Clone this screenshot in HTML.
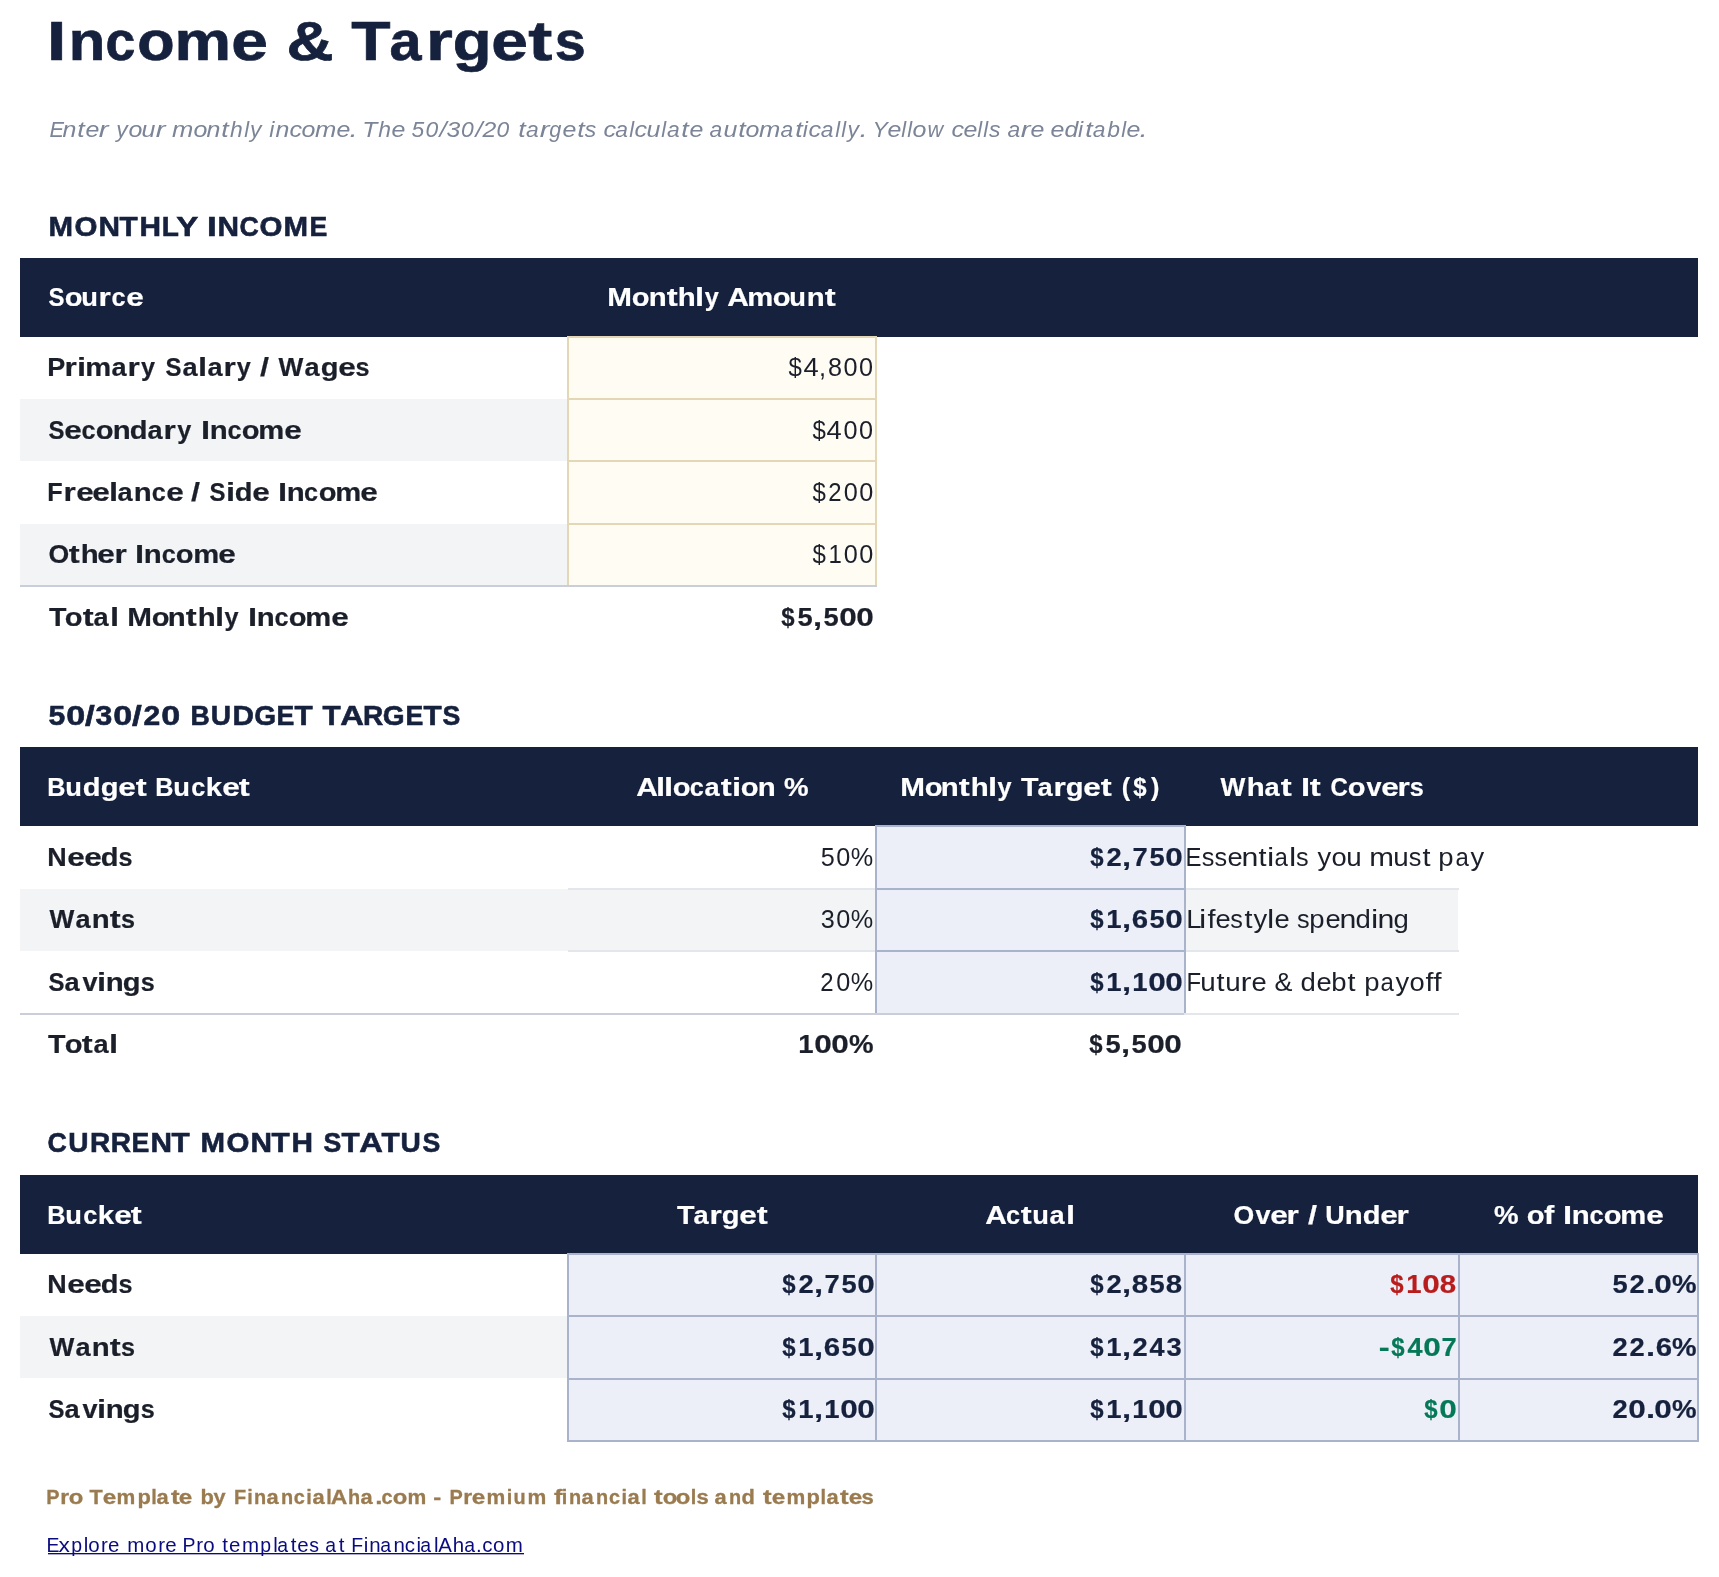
<!DOCTYPE html>
<html><head><meta charset="utf-8"><title>Income &amp; Targets</title>
<style>
html,body{margin:0;padding:0;background:#ffffff;width:1719px;height:1577px;overflow:hidden;position:relative}
.q{position:absolute}
#tx{position:absolute;left:0;top:0;width:1719px;height:1577px;will-change:transform}
#tx i{position:absolute;display:block;line-height:100px;height:100px;white-space:pre;text-align:center;font-style:normal;font-family:"Liberation Sans",sans-serif}
#tx .s0{top:-9.00px;font-size:55.62px;color:#15213d;font-weight:bold;-webkit-text-stroke:0.7px #15213d}
#tx .s1{top:78.60px;font-size:22.88px;color:#7b8597;font-style:italic}
#tx .s2{top:176.75px;font-size:28.08px;color:#15213d;font-weight:bold;-webkit-text-stroke:0.6px #15213d}
#tx .s3{top:247.25px;font-size:25.23px;color:#ffffff;font-weight:bold;-webkit-text-stroke:0.2px #ffffff}
#tx .s4{top:317.30px;font-size:25.23px;color:#1b1f2a;font-weight:bold;-webkit-text-stroke:0.2px #1b1f2a}
#tx .s5{top:379.70px;font-size:25.23px;color:#1b1f2a;font-weight:bold;-webkit-text-stroke:0.2px #1b1f2a}
#tx .s6{top:442.00px;font-size:25.23px;color:#1b1f2a;font-weight:bold;-webkit-text-stroke:0.2px #1b1f2a}
#tx .s7{top:504.00px;font-size:25.23px;color:#1b1f2a;font-weight:bold;-webkit-text-stroke:0.2px #1b1f2a}
#tx .s8{top:566.50px;font-size:25.23px;color:#1b1f2a;font-weight:bold;-webkit-text-stroke:0.2px #1b1f2a}
#tx .s9{top:317.30px;font-size:25.23px;color:#1b1f2a}
#tx .s10{top:379.70px;font-size:25.23px;color:#1b1f2a}
#tx .s11{top:442.00px;font-size:25.23px;color:#1b1f2a}
#tx .s12{top:504.00px;font-size:25.23px;color:#1b1f2a}
#tx .s13{top:665.80px;font-size:28.08px;color:#15213d;font-weight:bold;-webkit-text-stroke:0.6px #15213d}
#tx .s14{top:737.30px;font-size:25.23px;color:#ffffff;font-weight:bold;-webkit-text-stroke:0.2px #ffffff}
#tx .s15{top:807.00px;font-size:25.23px;color:#1b1f2a;font-weight:bold;-webkit-text-stroke:0.2px #1b1f2a}
#tx .s16{top:807.00px;font-size:25.23px;color:#1b1f2a}
#tx .s17{top:807.00px;font-size:25.23px;color:#15213d;font-weight:bold;-webkit-text-stroke:0.2px #15213d}
#tx .s18{top:869.10px;font-size:25.23px;color:#1b1f2a;font-weight:bold;-webkit-text-stroke:0.2px #1b1f2a}
#tx .s19{top:869.10px;font-size:25.23px;color:#1b1f2a}
#tx .s20{top:869.10px;font-size:25.23px;color:#15213d;font-weight:bold;-webkit-text-stroke:0.2px #15213d}
#tx .s21{top:931.70px;font-size:25.23px;color:#1b1f2a;font-weight:bold;-webkit-text-stroke:0.2px #1b1f2a}
#tx .s22{top:931.70px;font-size:25.23px;color:#1b1f2a}
#tx .s23{top:931.70px;font-size:25.23px;color:#15213d;font-weight:bold;-webkit-text-stroke:0.2px #15213d}
#tx .s24{top:994.00px;font-size:25.23px;color:#1b1f2a;font-weight:bold;-webkit-text-stroke:0.2px #1b1f2a}
#tx .s25{top:1092.60px;font-size:28.08px;color:#15213d;font-weight:bold;-webkit-text-stroke:0.6px #15213d}
#tx .s26{top:1165.30px;font-size:25.23px;color:#ffffff;font-weight:bold;-webkit-text-stroke:0.2px #ffffff}
#tx .s27{top:1234.00px;font-size:25.23px;color:#1b1f2a;font-weight:bold;-webkit-text-stroke:0.2px #1b1f2a}
#tx .s28{top:1234.00px;font-size:25.23px;color:#15213d;font-weight:bold;-webkit-text-stroke:0.2px #15213d}
#tx .s29{top:1234.00px;font-size:25.23px;color:#b91c1c;font-weight:bold;-webkit-text-stroke:0.2px #b91c1c}
#tx .s30{top:1296.80px;font-size:25.23px;color:#1b1f2a;font-weight:bold;-webkit-text-stroke:0.2px #1b1f2a}
#tx .s31{top:1296.80px;font-size:25.23px;color:#15213d;font-weight:bold;-webkit-text-stroke:0.2px #15213d}
#tx .s32{top:1296.80px;font-size:25.23px;color:#047857;font-weight:bold;-webkit-text-stroke:0.2px #047857}
#tx .s33{top:1359.00px;font-size:25.23px;color:#1b1f2a;font-weight:bold;-webkit-text-stroke:0.2px #1b1f2a}
#tx .s34{top:1359.00px;font-size:25.23px;color:#15213d;font-weight:bold;-webkit-text-stroke:0.2px #15213d}
#tx .s35{top:1359.00px;font-size:25.23px;color:#047857;font-weight:bold;-webkit-text-stroke:0.2px #047857}
#tx .s36{top:1447.00px;font-size:19.89px;color:#9a7b4f;font-weight:bold;-webkit-text-stroke:0.3px #9a7b4f}
#tx .s37{top:1494.70px;font-size:20.48px;color:#0b0b80}
</style></head><body>
<div class="q" style="left:20px;top:258px;width:1678px;height:79px;background:#15213d"></div>
<div class="q" style="left:20px;top:747px;width:1678px;height:79px;background:#15213d"></div>
<div class="q" style="left:20px;top:1175px;width:1678px;height:79px;background:#15213d"></div>
<div class="q" style="left:20px;top:399px;width:548px;height:62px;background:#f3f4f6"></div>
<div class="q" style="left:20px;top:524px;width:548px;height:61px;background:#f3f4f6"></div>
<div class="q" style="left:568px;top:337px;width:308px;height:249px;background:#fffcf3"></div>
<div class="q" style="left:568px;top:336px;width:308px;height:2px;background:#e3d7b5"></div>
<div class="q" style="left:568px;top:398px;width:308px;height:2px;background:#e3d7b5"></div>
<div class="q" style="left:568px;top:460px;width:308px;height:2px;background:#e3d7b5"></div>
<div class="q" style="left:568px;top:523px;width:308px;height:2px;background:#e3d7b5"></div>
<div class="q" style="left:567px;top:336px;width:2px;height:249px;background:#e3d7b5"></div>
<div class="q" style="left:875px;top:336px;width:2px;height:249px;background:#e3d7b5"></div>
<div class="q" style="left:20px;top:585px;width:857px;height:2px;background:#c9ced8"></div>
<div class="q" style="left:20px;top:889px;width:1438px;height:62px;background:#f3f4f6"></div>
<div class="q" style="left:568px;top:888px;width:308px;height:2px;background:#e3e6eb"></div>
<div class="q" style="left:568px;top:950px;width:308px;height:2px;background:#e3e6eb"></div>
<div class="q" style="left:1185px;top:888px;width:274px;height:2px;background:#e3e6eb"></div>
<div class="q" style="left:1185px;top:950px;width:274px;height:2px;background:#e3e6eb"></div>
<div class="q" style="left:876px;top:826px;width:309px;height:188px;background:#eceff7"></div>
<div class="q" style="left:876px;top:825px;width:309px;height:2px;background:#a9b3cc"></div>
<div class="q" style="left:876px;top:888px;width:309px;height:2px;background:#a9b3cc"></div>
<div class="q" style="left:876px;top:950px;width:309px;height:2px;background:#a9b3cc"></div>
<div class="q" style="left:875px;top:825px;width:2px;height:188px;background:#a9b3cc"></div>
<div class="q" style="left:1184px;top:825px;width:2px;height:188px;background:#a9b3cc"></div>
<div class="q" style="left:20px;top:1013px;width:1164px;height:2px;background:#c9ced8"></div>
<div class="q" style="left:1184px;top:1013px;width:275px;height:2px;background:#e3e6eb"></div>
<div class="q" style="left:20px;top:1316px;width:548px;height:62px;background:#f3f4f6"></div>
<div class="q" style="left:568px;top:1254px;width:1130px;height:187px;background:#eceff7"></div>
<div class="q" style="left:567px;top:1253px;width:1132px;height:2px;background:#a9b3cc"></div>
<div class="q" style="left:567px;top:1315px;width:1132px;height:2px;background:#a9b3cc"></div>
<div class="q" style="left:567px;top:1378px;width:1132px;height:2px;background:#a9b3cc"></div>
<div class="q" style="left:567px;top:1440px;width:1132px;height:2px;background:#a9b3cc"></div>
<div class="q" style="left:567px;top:1253px;width:2px;height:189px;background:#a9b3cc"></div>
<div class="q" style="left:875px;top:1253px;width:2px;height:189px;background:#a9b3cc"></div>
<div class="q" style="left:1184px;top:1253px;width:2px;height:189px;background:#a9b3cc"></div>
<div class="q" style="left:1458px;top:1253px;width:2px;height:189px;background:#a9b3cc"></div>
<div class="q" style="left:1697px;top:1253px;width:2px;height:189px;background:#a9b3cc"></div>
<div class="q" style="left:48px;top:1553px;width:476px;height:1px;background:#0b0b80"></div>
<div class="q" style="left:48px;top:1554px;width:476px;height:1px;background:#0b0b80;opacity:0.35"></div>
<div id="tx">
<i class="s0" style="left:49.45px;transform-origin:8.00px 0;transform:scaleX(1.250)">I</i>
<i class="s0" style="left:69.53px;transform-origin:17.50px 0;transform:scaleX(1.074)">n</i>
<i class="s0" style="left:105.48px;transform-origin:15.50px 0;transform:scaleX(0.963)">c</i>
<i class="s0" style="left:139.48px;transform-origin:17.00px 0;transform:scaleX(1.100)">o</i>
<i class="s0" style="left:178.09px;transform-origin:25.00px 0;transform:scaleX(1.143)">m</i>
<i class="s0" style="left:233.86px;transform-origin:15.50px 0;transform:scaleX(1.185)">e</i>
<i class="s0" style="left:289.78px;transform-origin:20.50px 0;transform:scaleX(1.171)">&amp;</i>
<i class="s0" style="left:354.17px;transform-origin:17.00px 0;transform:scaleX(1.156)">T</i>
<i class="s0" style="left:390.00px;transform-origin:16.50px 0;transform:scaleX(1.034)">a</i>
<i class="s0" style="left:428.95px;transform-origin:12.50px 0;transform:scaleX(1.235)">r</i>
<i class="s0" style="left:454.57px;transform-origin:16.00px 0;transform:scaleX(1.143)">g</i>
<i class="s0" style="left:493.73px;transform-origin:15.50px 0;transform:scaleX(1.185)">e</i>
<i class="s0" style="left:531.36px;transform-origin:9.50px 0;transform:scaleX(1.300)">t</i>
<i class="s0" style="left:554.67px;transform-origin:15.50px 0;transform:scaleX(1.000)">s</i>
<i class="s1" style="left:48.60px;transform-origin:8.00px 0;transform:scaleX(0.950)">E</i>
<i class="s1" style="left:63.49px;transform-origin:6.50px 0;transform:scaleX(1.091)">n</i>
<i class="s1" style="left:78.44px;transform-origin:4.00px 0;transform:scaleX(1.167)">t</i>
<i class="s1" style="left:86.07px;transform-origin:6.50px 0;transform:scaleX(1.091)">e</i>
<i class="s1" style="left:100.10px;transform-origin:4.50px 0;transform:scaleX(1.286)">r</i>
<i class="s1" style="left:116.13px;transform-origin:5.50px 0;transform:scaleX(1.000)">y</i>
<i class="s1" style="left:128.66px;transform-origin:6.50px 0;transform:scaleX(1.091)">o</i>
<i class="s1" style="left:142.12px;transform-origin:6.50px 0;transform:scaleX(1.091)">u</i>
<i class="s1" style="left:156.55px;transform-origin:4.50px 0;transform:scaleX(1.286)">r</i>
<i class="s1" style="left:172.60px;transform-origin:9.50px 0;transform:scaleX(1.118)">m</i>
<i class="s1" style="left:193.52px;transform-origin:6.50px 0;transform:scaleX(1.091)">o</i>
<i class="s1" style="left:206.99px;transform-origin:6.50px 0;transform:scaleX(1.091)">n</i>
<i class="s1" style="left:221.93px;transform-origin:4.00px 0;transform:scaleX(1.167)">t</i>
<i class="s1" style="left:230.05px;transform-origin:6.00px 0;transform:scaleX(1.000)">h</i>
<i class="s1" style="left:243.51px;transform-origin:3.00px 0;transform:scaleX(0.950)">l</i>
<i class="s1" style="left:250.12px;transform-origin:5.50px 0;transform:scaleX(1.000)">y</i>
<i class="s1" style="left:269.13px;transform-origin:3.50px 0;transform:scaleX(1.000)">i</i>
<i class="s1" style="left:275.74px;transform-origin:6.50px 0;transform:scaleX(1.091)">n</i>
<i class="s1" style="left:289.68px;transform-origin:6.00px 0;transform:scaleX(1.100)">c</i>
<i class="s1" style="left:301.77px;transform-origin:6.50px 0;transform:scaleX(1.091)">o</i>
<i class="s1" style="left:315.74px;transform-origin:9.50px 0;transform:scaleX(1.118)">m</i>
<i class="s1" style="left:336.66px;transform-origin:6.50px 0;transform:scaleX(1.091)">e</i>
<i class="s1" style="left:350.21px;transform-origin:2.00px 0;transform:scaleX(1.300)">.</i>
<i class="s1" style="left:363.19px;transform-origin:8.50px 0;transform:scaleX(1.077)">T</i>
<i class="s1" style="left:378.13px;transform-origin:6.00px 0;transform:scaleX(1.000)">h</i>
<i class="s1" style="left:391.57px;transform-origin:6.50px 0;transform:scaleX(1.091)">e</i>
<i class="s1" style="left:411.60px;transform-origin:7.00px 0;transform:scaleX(1.000)">5</i>
<i class="s1" style="left:425.60px;transform-origin:7.00px 0;transform:scaleX(1.000)">0</i>
<i class="s1" style="left:440.10px;transform-origin:3.50px 0;transform:scaleX(1.111)">/</i>
<i class="s1" style="left:446.51px;transform-origin:7.00px 0;transform:scaleX(1.083)">3</i>
<i class="s1" style="left:461.01px;transform-origin:7.00px 0;transform:scaleX(1.000)">0</i>
<i class="s1" style="left:475.51px;transform-origin:3.50px 0;transform:scaleX(1.111)">/</i>
<i class="s1" style="left:482.91px;transform-origin:6.00px 0;transform:scaleX(1.083)">2</i>
<i class="s1" style="left:496.41px;transform-origin:7.00px 0;transform:scaleX(1.000)">0</i>
<i class="s1" style="left:518.90px;transform-origin:4.00px 0;transform:scaleX(1.167)">t</i>
<i class="s1" style="left:526.02px;transform-origin:6.50px 0;transform:scaleX(1.000)">a</i>
<i class="s1" style="left:540.51px;transform-origin:4.50px 0;transform:scaleX(1.286)">r</i>
<i class="s1" style="left:549.05px;transform-origin:6.50px 0;transform:scaleX(0.950)">g</i>
<i class="s1" style="left:563.02px;transform-origin:6.50px 0;transform:scaleX(1.091)">e</i>
<i class="s1" style="left:577.55px;transform-origin:4.00px 0;transform:scaleX(1.167)">t</i>
<i class="s1" style="left:584.68px;transform-origin:5.50px 0;transform:scaleX(1.000)">s</i>
<i class="s1" style="left:603.63px;transform-origin:6.00px 0;transform:scaleX(1.100)">c</i>
<i class="s1" style="left:615.23px;transform-origin:6.50px 0;transform:scaleX(1.000)">a</i>
<i class="s1" style="left:629.21px;transform-origin:3.00px 0;transform:scaleX(0.950)">l</i>
<i class="s1" style="left:635.32px;transform-origin:6.00px 0;transform:scaleX(1.100)">c</i>
<i class="s1" style="left:647.41px;transform-origin:6.50px 0;transform:scaleX(1.091)">u</i>
<i class="s1" style="left:661.37px;transform-origin:3.00px 0;transform:scaleX(0.950)">l</i>
<i class="s1" style="left:666.98px;transform-origin:6.50px 0;transform:scaleX(1.000)">a</i>
<i class="s1" style="left:681.96px;transform-origin:4.00px 0;transform:scaleX(1.167)">t</i>
<i class="s1" style="left:689.58px;transform-origin:6.50px 0;transform:scaleX(1.091)">e</i>
<i class="s1" style="left:709.62px;transform-origin:6.50px 0;transform:scaleX(1.000)">a</i>
<i class="s1" style="left:723.58px;transform-origin:6.50px 0;transform:scaleX(1.091)">u</i>
<i class="s1" style="left:738.54px;transform-origin:4.00px 0;transform:scaleX(1.167)">t</i>
<i class="s1" style="left:746.16px;transform-origin:6.50px 0;transform:scaleX(1.091)">o</i>
<i class="s1" style="left:760.12px;transform-origin:9.50px 0;transform:scaleX(1.118)">m</i>
<i class="s1" style="left:780.55px;transform-origin:6.50px 0;transform:scaleX(1.000)">a</i>
<i class="s1" style="left:795.54px;transform-origin:4.00px 0;transform:scaleX(1.167)">t</i>
<i class="s1" style="left:802.66px;transform-origin:3.50px 0;transform:scaleX(1.000)">i</i>
<i class="s1" style="left:809.27px;transform-origin:6.00px 0;transform:scaleX(1.100)">c</i>
<i class="s1" style="left:820.87px;transform-origin:6.50px 0;transform:scaleX(1.000)">a</i>
<i class="s1" style="left:834.85px;transform-origin:3.00px 0;transform:scaleX(0.950)">l</i>
<i class="s1" style="left:840.96px;transform-origin:3.00px 0;transform:scaleX(0.950)">l</i>
<i class="s1" style="left:847.57px;transform-origin:5.50px 0;transform:scaleX(1.000)">y</i>
<i class="s1" style="left:860.08px;transform-origin:2.00px 0;transform:scaleX(1.300)">.</i>
<i class="s1" style="left:872.58px;transform-origin:9.50px 0;transform:scaleX(1.000)">Y</i>
<i class="s1" style="left:887.52px;transform-origin:6.50px 0;transform:scaleX(1.091)">e</i>
<i class="s1" style="left:901.05px;transform-origin:3.00px 0;transform:scaleX(0.950)">l</i>
<i class="s1" style="left:907.16px;transform-origin:3.00px 0;transform:scaleX(0.950)">l</i>
<i class="s1" style="left:913.27px;transform-origin:6.50px 0;transform:scaleX(1.091)">o</i>
<i class="s1" style="left:926.74px;transform-origin:9.50px 0;transform:scaleX(0.950)">w</i>
<i class="s1" style="left:951.73px;transform-origin:6.00px 0;transform:scaleX(1.100)">c</i>
<i class="s1" style="left:963.82px;transform-origin:6.50px 0;transform:scaleX(1.091)">e</i>
<i class="s1" style="left:977.35px;transform-origin:3.00px 0;transform:scaleX(0.950)">l</i>
<i class="s1" style="left:983.46px;transform-origin:3.00px 0;transform:scaleX(0.950)">l</i>
<i class="s1" style="left:989.08px;transform-origin:5.50px 0;transform:scaleX(1.000)">s</i>
<i class="s1" style="left:1007.54px;transform-origin:6.50px 0;transform:scaleX(1.000)">a</i>
<i class="s1" style="left:1022.01px;transform-origin:4.50px 0;transform:scaleX(1.286)">r</i>
<i class="s1" style="left:1030.55px;transform-origin:6.50px 0;transform:scaleX(1.091)">e</i>
<i class="s1" style="left:1051.08px;transform-origin:6.50px 0;transform:scaleX(1.091)">e</i>
<i class="s1" style="left:1064.62px;transform-origin:7.00px 0;transform:scaleX(1.083)">d</i>
<i class="s1" style="left:1078.08px;transform-origin:3.50px 0;transform:scaleX(1.000)">i</i>
<i class="s1" style="left:1085.69px;transform-origin:4.00px 0;transform:scaleX(1.167)">t</i>
<i class="s1" style="left:1092.82px;transform-origin:6.50px 0;transform:scaleX(1.000)">a</i>
<i class="s1" style="left:1107.30px;transform-origin:6.00px 0;transform:scaleX(1.000)">b</i>
<i class="s1" style="left:1120.77px;transform-origin:3.00px 0;transform:scaleX(0.950)">l</i>
<i class="s1" style="left:1126.88px;transform-origin:6.50px 0;transform:scaleX(1.091)">e</i>
<i class="s1" style="left:1140.41px;transform-origin:2.00px 0;transform:scaleX(1.300)">.</i>
<i class="s2" style="left:48.75px;transform-origin:12.00px 0;transform:scaleX(1.050)">M</i>
<i class="s2" style="left:74.61px;transform-origin:11.00px 0;transform:scaleX(1.050)">O</i>
<i class="s2" style="left:98.56px;transform-origin:10.00px 0;transform:scaleX(1.062)">N</i>
<i class="s2" style="left:120.16px;transform-origin:8.50px 0;transform:scaleX(1.059)">T</i>
<i class="s2" style="left:139.58px;transform-origin:10.00px 0;transform:scaleX(1.062)">H</i>
<i class="s2" style="left:161.67px;transform-origin:9.00px 0;transform:scaleX(1.000)">L</i>
<i class="s2" style="left:178.38px;transform-origin:9.50px 0;transform:scaleX(1.176)">Y</i>
<i class="s2" style="left:208.33px;transform-origin:4.00px 0;transform:scaleX(1.250)">I</i>
<i class="s2" style="left:218.38px;transform-origin:10.00px 0;transform:scaleX(1.062)">N</i>
<i class="s2" style="left:238.97px;transform-origin:10.00px 0;transform:scaleX(0.950)">C</i>
<i class="s2" style="left:259.78px;transform-origin:11.00px 0;transform:scaleX(1.050)">O</i>
<i class="s2" style="left:283.73px;transform-origin:12.00px 0;transform:scaleX(1.050)">M</i>
<i class="s2" style="left:309.11px;transform-origin:10.00px 0;transform:scaleX(0.950)">E</i>
<i class="s3" style="left:48.00px;transform-origin:8.50px 0;transform:scaleX(0.950)">S</i>
<i class="s3" style="left:66.14px;transform-origin:7.50px 0;transform:scaleX(1.154)">o</i>
<i class="s3" style="left:82.47px;transform-origin:8.00px 0;transform:scaleX(1.083)">u</i>
<i class="s3" style="left:100.41px;transform-origin:6.00px 0;transform:scaleX(1.250)">r</i>
<i class="s3" style="left:111.50px;transform-origin:7.00px 0;transform:scaleX(1.000)">c</i>
<i class="s3" style="left:127.52px;transform-origin:7.00px 0;transform:scaleX(1.250)">e</i>
<i class="s3" style="left:608.95px;transform-origin:10.50px 0;transform:scaleX(1.176)">M</i>
<i class="s3" style="left:632.83px;transform-origin:7.50px 0;transform:scaleX(1.154)">o</i>
<i class="s3" style="left:649.65px;transform-origin:8.00px 0;transform:scaleX(1.167)">n</i>
<i class="s3" style="left:667.59px;transform-origin:4.00px 0;transform:scaleX(1.300)">t</i>
<i class="s3" style="left:678.81px;transform-origin:8.00px 0;transform:scaleX(1.167)">h</i>
<i class="s3" style="left:695.75px;transform-origin:3.50px 0;transform:scaleX(1.300)">l</i>
<i class="s3" style="left:704.65px;transform-origin:7.00px 0;transform:scaleX(1.000)">y</i>
<i class="s3" style="left:728.65px;transform-origin:9.00px 0;transform:scaleX(1.188)">A</i>
<i class="s3" style="left:748.61px;transform-origin:11.50px 0;transform:scaleX(1.158)">m</i>
<i class="s3" style="left:773.64px;transform-origin:7.50px 0;transform:scaleX(1.154)">o</i>
<i class="s3" style="left:789.97px;transform-origin:8.00px 0;transform:scaleX(1.083)">u</i>
<i class="s3" style="left:807.92px;transform-origin:8.00px 0;transform:scaleX(1.167)">n</i>
<i class="s3" style="left:825.86px;transform-origin:4.00px 0;transform:scaleX(1.300)">t</i>
<i class="s4" style="left:48.00px;transform-origin:9.00px 0;transform:scaleX(1.071)">P</i>
<i class="s4" style="left:66.45px;transform-origin:6.00px 0;transform:scaleX(1.250)">r</i>
<i class="s4" style="left:78.03px;transform-origin:3.50px 0;transform:scaleX(1.300)">i</i>
<i class="s4" style="left:87.42px;transform-origin:11.50px 0;transform:scaleX(1.158)">m</i>
<i class="s4" style="left:111.95px;transform-origin:7.50px 0;transform:scaleX(1.077)">a</i>
<i class="s4" style="left:128.98px;transform-origin:6.00px 0;transform:scaleX(1.250)">r</i>
<i class="s4" style="left:141.08px;transform-origin:7.00px 0;transform:scaleX(1.000)">y</i>
<i class="s4" style="left:165.08px;transform-origin:8.50px 0;transform:scaleX(0.950)">S</i>
<i class="s4" style="left:182.72px;transform-origin:7.50px 0;transform:scaleX(1.077)">a</i>
<i class="s4" style="left:199.25px;transform-origin:3.50px 0;transform:scaleX(1.300)">l</i>
<i class="s4" style="left:207.66px;transform-origin:7.50px 0;transform:scaleX(1.077)">a</i>
<i class="s4" style="left:224.69px;transform-origin:6.00px 0;transform:scaleX(1.250)">r</i>
<i class="s4" style="left:236.77px;transform-origin:7.00px 0;transform:scaleX(1.000)">y</i>
<i class="s4" style="left:261.27px;transform-origin:3.50px 0;transform:scaleX(1.286)">/</i>
<i class="s4" style="left:279.23px;transform-origin:12.00px 0;transform:scaleX(1.042)">W</i>
<i class="s4" style="left:305.27px;transform-origin:7.50px 0;transform:scaleX(1.077)">a</i>
<i class="s4" style="left:322.30px;transform-origin:7.50px 0;transform:scaleX(1.154)">g</i>
<i class="s4" style="left:340.34px;transform-origin:7.00px 0;transform:scaleX(1.250)">e</i>
<i class="s4" style="left:355.45px;transform-origin:7.00px 0;transform:scaleX(1.000)">s</i>
<i class="s5" style="left:47.62px;transform-origin:8.50px 0;transform:scaleX(0.950)">S</i>
<i class="s5" style="left:66.27px;transform-origin:7.00px 0;transform:scaleX(1.250)">e</i>
<i class="s5" style="left:81.38px;transform-origin:7.00px 0;transform:scaleX(1.000)">c</i>
<i class="s5" style="left:96.91px;transform-origin:7.50px 0;transform:scaleX(1.154)">o</i>
<i class="s5" style="left:113.73px;transform-origin:8.00px 0;transform:scaleX(1.167)">n</i>
<i class="s5" style="left:131.17px;transform-origin:7.50px 0;transform:scaleX(1.154)">d</i>
<i class="s5" style="left:148.22px;transform-origin:7.50px 0;transform:scaleX(1.077)">a</i>
<i class="s5" style="left:165.25px;transform-origin:6.00px 0;transform:scaleX(1.250)">r</i>
<i class="s5" style="left:177.33px;transform-origin:7.00px 0;transform:scaleX(1.000)">y</i>
<i class="s5" style="left:201.83px;transform-origin:3.50px 0;transform:scaleX(1.300)">I</i>
<i class="s5" style="left:210.94px;transform-origin:8.00px 0;transform:scaleX(1.167)">n</i>
<i class="s5" style="left:227.39px;transform-origin:7.00px 0;transform:scaleX(1.000)">c</i>
<i class="s5" style="left:242.91px;transform-origin:7.50px 0;transform:scaleX(1.154)">o</i>
<i class="s5" style="left:260.23px;transform-origin:11.50px 0;transform:scaleX(1.158)">m</i>
<i class="s5" style="left:285.77px;transform-origin:7.00px 0;transform:scaleX(1.250)">e</i>
<i class="s6" style="left:47.25px;transform-origin:8.50px 0;transform:scaleX(1.000)">F</i>
<i class="s6" style="left:64.98px;transform-origin:6.00px 0;transform:scaleX(1.250)">r</i>
<i class="s6" style="left:77.56px;transform-origin:7.00px 0;transform:scaleX(1.250)">e</i>
<i class="s6" style="left:94.17px;transform-origin:7.00px 0;transform:scaleX(1.250)">e</i>
<i class="s6" style="left:109.80px;transform-origin:3.50px 0;transform:scaleX(1.300)">l</i>
<i class="s6" style="left:118.19px;transform-origin:7.50px 0;transform:scaleX(1.077)">a</i>
<i class="s6" style="left:135.22px;transform-origin:8.00px 0;transform:scaleX(1.167)">n</i>
<i class="s6" style="left:151.67px;transform-origin:7.00px 0;transform:scaleX(1.000)">c</i>
<i class="s6" style="left:167.69px;transform-origin:7.00px 0;transform:scaleX(1.250)">e</i>
<i class="s6" style="left:192.33px;transform-origin:3.50px 0;transform:scaleX(1.286)">/</i>
<i class="s6" style="left:209.31px;transform-origin:8.50px 0;transform:scaleX(0.950)">S</i>
<i class="s6" style="left:226.95px;transform-origin:3.50px 0;transform:scaleX(1.300)">i</i>
<i class="s6" style="left:235.86px;transform-origin:7.50px 0;transform:scaleX(1.154)">d</i>
<i class="s6" style="left:253.89px;transform-origin:7.00px 0;transform:scaleX(1.250)">e</i>
<i class="s6" style="left:278.55px;transform-origin:3.50px 0;transform:scaleX(1.300)">I</i>
<i class="s6" style="left:287.66px;transform-origin:8.00px 0;transform:scaleX(1.167)">n</i>
<i class="s6" style="left:304.09px;transform-origin:7.00px 0;transform:scaleX(1.000)">c</i>
<i class="s6" style="left:319.62px;transform-origin:7.50px 0;transform:scaleX(1.154)">o</i>
<i class="s6" style="left:336.95px;transform-origin:11.50px 0;transform:scaleX(1.158)">m</i>
<i class="s6" style="left:362.48px;transform-origin:7.00px 0;transform:scaleX(1.250)">e</i>
<i class="s7" style="left:48.50px;transform-origin:10.00px 0;transform:scaleX(1.056)">O</i>
<i class="s7" style="left:70.31px;transform-origin:4.00px 0;transform:scaleX(1.300)">t</i>
<i class="s7" style="left:81.53px;transform-origin:8.00px 0;transform:scaleX(1.167)">h</i>
<i class="s7" style="left:99.47px;transform-origin:7.00px 0;transform:scaleX(1.250)">e</i>
<i class="s7" style="left:115.59px;transform-origin:6.00px 0;transform:scaleX(1.250)">r</i>
<i class="s7" style="left:136.20px;transform-origin:3.50px 0;transform:scaleX(1.300)">I</i>
<i class="s7" style="left:145.31px;transform-origin:8.00px 0;transform:scaleX(1.167)">n</i>
<i class="s7" style="left:161.77px;transform-origin:7.00px 0;transform:scaleX(1.000)">c</i>
<i class="s7" style="left:177.28px;transform-origin:7.50px 0;transform:scaleX(1.154)">o</i>
<i class="s7" style="left:194.61px;transform-origin:11.50px 0;transform:scaleX(1.158)">m</i>
<i class="s7" style="left:220.14px;transform-origin:7.00px 0;transform:scaleX(1.250)">e</i>
<i class="s8" style="left:49.50px;transform-origin:7.50px 0;transform:scaleX(1.133)">T</i>
<i class="s8" style="left:66.20px;transform-origin:7.50px 0;transform:scaleX(1.154)">o</i>
<i class="s8" style="left:83.53px;transform-origin:4.00px 0;transform:scaleX(1.300)">t</i>
<i class="s8" style="left:94.25px;transform-origin:7.50px 0;transform:scaleX(1.077)">a</i>
<i class="s8" style="left:110.78px;transform-origin:3.50px 0;transform:scaleX(1.300)">l</i>
<i class="s8" style="left:128.70px;transform-origin:10.50px 0;transform:scaleX(1.176)">M</i>
<i class="s8" style="left:152.59px;transform-origin:7.50px 0;transform:scaleX(1.154)">o</i>
<i class="s8" style="left:169.42px;transform-origin:8.00px 0;transform:scaleX(1.167)">n</i>
<i class="s8" style="left:187.36px;transform-origin:4.00px 0;transform:scaleX(1.300)">t</i>
<i class="s8" style="left:198.58px;transform-origin:8.00px 0;transform:scaleX(1.167)">h</i>
<i class="s8" style="left:215.52px;transform-origin:3.50px 0;transform:scaleX(1.300)">l</i>
<i class="s8" style="left:224.41px;transform-origin:7.00px 0;transform:scaleX(1.000)">y</i>
<i class="s8" style="left:248.91px;transform-origin:3.50px 0;transform:scaleX(1.300)">I</i>
<i class="s8" style="left:258.03px;transform-origin:8.00px 0;transform:scaleX(1.167)">n</i>
<i class="s8" style="left:274.47px;transform-origin:7.00px 0;transform:scaleX(1.000)">c</i>
<i class="s8" style="left:290.00px;transform-origin:7.50px 0;transform:scaleX(1.154)">o</i>
<i class="s8" style="left:307.33px;transform-origin:11.50px 0;transform:scaleX(1.158)">m</i>
<i class="s8" style="left:332.86px;transform-origin:7.00px 0;transform:scaleX(1.250)">e</i>
<i class="s9" style="left:788.45px;transform-origin:7.50px 0;transform:scaleX(0.950)">$</i>
<i class="s9" style="left:804.03px;transform-origin:7.00px 0;transform:scaleX(1.083)">4</i>
<i class="s9" style="left:819.12px;transform-origin:3.50px 0;transform:scaleX(1.000)">,</i>
<i class="s9" style="left:827.90px;transform-origin:7.00px 0;transform:scaleX(1.000)">8</i>
<i class="s9" style="left:843.50px;transform-origin:7.00px 0;transform:scaleX(1.000)">0</i>
<i class="s9" style="left:859.08px;transform-origin:7.00px 0;transform:scaleX(1.000)">0</i>
<i class="s10" style="left:811.85px;transform-origin:7.50px 0;transform:scaleX(0.950)">$</i>
<i class="s10" style="left:827.43px;transform-origin:7.00px 0;transform:scaleX(1.083)">4</i>
<i class="s10" style="left:843.52px;transform-origin:7.00px 0;transform:scaleX(1.000)">0</i>
<i class="s10" style="left:859.10px;transform-origin:7.00px 0;transform:scaleX(1.000)">0</i>
<i class="s11" style="left:812.00px;transform-origin:7.50px 0;transform:scaleX(0.950)">$</i>
<i class="s11" style="left:827.58px;transform-origin:7.00px 0;transform:scaleX(0.950)">2</i>
<i class="s11" style="left:843.67px;transform-origin:7.00px 0;transform:scaleX(1.000)">0</i>
<i class="s11" style="left:859.25px;transform-origin:7.00px 0;transform:scaleX(1.000)">0</i>
<i class="s12" style="left:812.00px;transform-origin:7.50px 0;transform:scaleX(0.950)">$</i>
<i class="s12" style="left:827.58px;transform-origin:7.50px 0;transform:scaleX(0.950)">1</i>
<i class="s12" style="left:843.67px;transform-origin:7.00px 0;transform:scaleX(1.000)">0</i>
<i class="s12" style="left:859.25px;transform-origin:7.00px 0;transform:scaleX(1.000)">0</i>
<i class="s8" style="left:780.95px;transform-origin:7.00px 0;transform:scaleX(0.950)">$</i>
<i class="s8" style="left:798.00px;transform-origin:7.00px 0;transform:scaleX(1.083)">5</i>
<i class="s8" style="left:814.04px;transform-origin:3.50px 0;transform:scaleX(1.300)">,</i>
<i class="s8" style="left:824.34px;transform-origin:7.00px 0;transform:scaleX(1.083)">5</i>
<i class="s8" style="left:841.39px;transform-origin:7.00px 0;transform:scaleX(1.250)">0</i>
<i class="s8" style="left:858.43px;transform-origin:7.00px 0;transform:scaleX(1.250)">0</i>
<i class="s13" style="left:48.95px;transform-origin:8.00px 0;transform:scaleX(1.071)">5</i>
<i class="s13" style="left:67.73px;transform-origin:8.00px 0;transform:scaleX(1.214)">0</i>
<i class="s13" style="left:86.01px;transform-origin:4.00px 0;transform:scaleX(1.250)">/</i>
<i class="s13" style="left:96.37px;transform-origin:8.00px 0;transform:scaleX(1.071)">3</i>
<i class="s13" style="left:115.17px;transform-origin:8.00px 0;transform:scaleX(1.214)">0</i>
<i class="s13" style="left:133.45px;transform-origin:4.00px 0;transform:scaleX(1.250)">/</i>
<i class="s13" style="left:143.81px;transform-origin:8.00px 0;transform:scaleX(1.071)">2</i>
<i class="s13" style="left:162.59px;transform-origin:8.00px 0;transform:scaleX(1.214)">0</i>
<i class="s13" style="left:189.78px;transform-origin:10.50px 0;transform:scaleX(0.950)">B</i>
<i class="s13" style="left:210.87px;transform-origin:10.50px 0;transform:scaleX(1.000)">U</i>
<i class="s13" style="left:233.29px;transform-origin:10.50px 0;transform:scaleX(1.059)">D</i>
<i class="s13" style="left:254.20px;transform-origin:10.50px 0;transform:scaleX(1.000)">G</i>
<i class="s13" style="left:276.36px;transform-origin:10.00px 0;transform:scaleX(0.950)">E</i>
<i class="s13" style="left:295.31px;transform-origin:8.50px 0;transform:scaleX(1.059)">T</i>
<i class="s13" style="left:323.12px;transform-origin:8.50px 0;transform:scaleX(1.059)">T</i>
<i class="s13" style="left:341.54px;transform-origin:10.00px 0;transform:scaleX(1.167)">A</i>
<i class="s13" style="left:362.93px;transform-origin:10.50px 0;transform:scaleX(1.000)">R</i>
<i class="s13" style="left:382.73px;transform-origin:10.50px 0;transform:scaleX(1.000)">G</i>
<i class="s13" style="left:404.89px;transform-origin:10.00px 0;transform:scaleX(0.950)">E</i>
<i class="s13" style="left:423.84px;transform-origin:8.50px 0;transform:scaleX(1.059)">T</i>
<i class="s13" style="left:442.25px;transform-origin:9.50px 0;transform:scaleX(0.950)">S</i>
<i class="s14" style="left:47.20px;transform-origin:9.50px 0;transform:scaleX(1.000)">B</i>
<i class="s14" style="left:66.37px;transform-origin:8.00px 0;transform:scaleX(1.083)">u</i>
<i class="s14" style="left:84.31px;transform-origin:7.50px 0;transform:scaleX(1.154)">d</i>
<i class="s14" style="left:101.84px;transform-origin:7.50px 0;transform:scaleX(1.154)">g</i>
<i class="s14" style="left:119.89px;transform-origin:7.00px 0;transform:scaleX(1.250)">e</i>
<i class="s14" style="left:136.50px;transform-origin:4.00px 0;transform:scaleX(1.300)">t</i>
<i class="s14" style="left:155.25px;transform-origin:9.50px 0;transform:scaleX(1.000)">B</i>
<i class="s14" style="left:174.42px;transform-origin:8.00px 0;transform:scaleX(1.083)">u</i>
<i class="s14" style="left:191.36px;transform-origin:7.00px 0;transform:scaleX(1.000)">c</i>
<i class="s14" style="left:206.89px;transform-origin:8.00px 0;transform:scaleX(1.167)">k</i>
<i class="s14" style="left:223.67px;transform-origin:7.00px 0;transform:scaleX(1.250)">e</i>
<i class="s14" style="left:240.29px;transform-origin:4.00px 0;transform:scaleX(1.300)">t</i>
<i class="s14" style="left:637.70px;transform-origin:9.00px 0;transform:scaleX(1.188)">A</i>
<i class="s14" style="left:656.65px;transform-origin:3.50px 0;transform:scaleX(1.300)">l</i>
<i class="s14" style="left:665.04px;transform-origin:3.50px 0;transform:scaleX(1.300)">l</i>
<i class="s14" style="left:673.95px;transform-origin:7.50px 0;transform:scaleX(1.154)">o</i>
<i class="s14" style="left:689.78px;transform-origin:7.00px 0;transform:scaleX(1.000)">c</i>
<i class="s14" style="left:704.81px;transform-origin:7.50px 0;transform:scaleX(1.077)">a</i>
<i class="s14" style="left:722.34px;transform-origin:4.00px 0;transform:scaleX(1.300)">t</i>
<i class="s14" style="left:733.04px;transform-origin:3.50px 0;transform:scaleX(1.300)">i</i>
<i class="s14" style="left:741.95px;transform-origin:7.50px 0;transform:scaleX(1.154)">o</i>
<i class="s14" style="left:758.78px;transform-origin:8.00px 0;transform:scaleX(1.167)">n</i>
<i class="s14" style="left:784.75px;transform-origin:11.50px 0;transform:scaleX(1.095)">%</i>
<i class="s14" style="left:901.75px;transform-origin:10.50px 0;transform:scaleX(1.176)">M</i>
<i class="s14" style="left:925.62px;transform-origin:7.50px 0;transform:scaleX(1.154)">o</i>
<i class="s14" style="left:942.45px;transform-origin:8.00px 0;transform:scaleX(1.167)">n</i>
<i class="s14" style="left:960.39px;transform-origin:4.00px 0;transform:scaleX(1.300)">t</i>
<i class="s14" style="left:971.61px;transform-origin:8.00px 0;transform:scaleX(1.167)">h</i>
<i class="s14" style="left:988.55px;transform-origin:3.50px 0;transform:scaleX(1.300)">l</i>
<i class="s14" style="left:997.45px;transform-origin:7.00px 0;transform:scaleX(1.000)">y</i>
<i class="s14" style="left:1021.95px;transform-origin:7.50px 0;transform:scaleX(1.133)">T</i>
<i class="s14" style="left:1038.16px;transform-origin:7.50px 0;transform:scaleX(1.077)">a</i>
<i class="s14" style="left:1055.19px;transform-origin:6.00px 0;transform:scaleX(1.250)">r</i>
<i class="s14" style="left:1067.28px;transform-origin:7.50px 0;transform:scaleX(1.154)">g</i>
<i class="s14" style="left:1085.31px;transform-origin:7.00px 0;transform:scaleX(1.250)">e</i>
<i class="s14" style="left:1101.92px;transform-origin:4.00px 0;transform:scaleX(1.300)">t</i>
<i class="s14" style="left:1121.67px;transform-origin:4.50px 0;transform:scaleX(1.000)">(</i>
<i class="s14" style="left:1133.38px;transform-origin:7.00px 0;transform:scaleX(0.950)">$</i>
<i class="s14" style="left:1150.92px;transform-origin:3.50px 0;transform:scaleX(1.000)">)</i>
<i class="s14" style="left:1221.15px;transform-origin:12.00px 0;transform:scaleX(1.042)">W</i>
<i class="s14" style="left:1247.67px;transform-origin:8.00px 0;transform:scaleX(1.167)">h</i>
<i class="s14" style="left:1264.60px;transform-origin:7.50px 0;transform:scaleX(1.077)">a</i>
<i class="s14" style="left:1282.13px;transform-origin:4.00px 0;transform:scaleX(1.300)">t</i>
<i class="s14" style="left:1301.88px;transform-origin:3.50px 0;transform:scaleX(1.300)">I</i>
<i class="s14" style="left:1311.49px;transform-origin:4.00px 0;transform:scaleX(1.300)">t</i>
<i class="s14" style="left:1329.74px;transform-origin:9.00px 0;transform:scaleX(0.950)">C</i>
<i class="s14" style="left:1349.21px;transform-origin:7.50px 0;transform:scaleX(1.154)">o</i>
<i class="s14" style="left:1366.56px;transform-origin:7.00px 0;transform:scaleX(1.071)">v</i>
<i class="s14" style="left:1382.53px;transform-origin:7.00px 0;transform:scaleX(1.250)">e</i>
<i class="s14" style="left:1398.63px;transform-origin:6.00px 0;transform:scaleX(1.250)">r</i>
<i class="s14" style="left:1409.73px;transform-origin:7.00px 0;transform:scaleX(1.000)">s</i>
<i class="s15" style="left:47.75px;transform-origin:9.50px 0;transform:scaleX(1.067)">N</i>
<i class="s15" style="left:69.25px;transform-origin:7.00px 0;transform:scaleX(1.250)">e</i>
<i class="s15" style="left:85.86px;transform-origin:7.00px 0;transform:scaleX(1.250)">e</i>
<i class="s15" style="left:101.98px;transform-origin:7.50px 0;transform:scaleX(1.154)">d</i>
<i class="s15" style="left:118.52px;transform-origin:7.00px 0;transform:scaleX(1.000)">s</i>
<i class="s16" style="left:820.70px;transform-origin:7.00px 0;transform:scaleX(1.000)">5</i>
<i class="s16" style="left:836.28px;transform-origin:7.00px 0;transform:scaleX(1.000)">0</i>
<i class="s16" style="left:850.87px;transform-origin:11.50px 0;transform:scaleX(1.000)">%</i>
<i class="s17" style="left:1089.50px;transform-origin:7.00px 0;transform:scaleX(0.950)">$</i>
<i class="s17" style="left:1106.55px;transform-origin:7.00px 0;transform:scaleX(1.083)">2</i>
<i class="s17" style="left:1122.59px;transform-origin:3.50px 0;transform:scaleX(1.300)">,</i>
<i class="s17" style="left:1132.89px;transform-origin:7.00px 0;transform:scaleX(1.083)">7</i>
<i class="s17" style="left:1149.94px;transform-origin:7.00px 0;transform:scaleX(1.083)">5</i>
<i class="s17" style="left:1166.98px;transform-origin:7.00px 0;transform:scaleX(1.250)">0</i>
<i class="s16" style="left:1185.20px;transform-origin:9.00px 0;transform:scaleX(0.950)">E</i>
<i class="s16" style="left:1201.67px;transform-origin:6.50px 0;transform:scaleX(1.000)">s</i>
<i class="s16" style="left:1214.43px;transform-origin:6.50px 0;transform:scaleX(1.000)">s</i>
<i class="s16" style="left:1227.70px;transform-origin:7.00px 0;transform:scaleX(1.083)">e</i>
<i class="s16" style="left:1243.28px;transform-origin:7.00px 0;transform:scaleX(1.200)">n</i>
<i class="s16" style="left:1259.31px;transform-origin:3.50px 0;transform:scaleX(1.143)">t</i>
<i class="s16" style="left:1267.90px;transform-origin:3.00px 0;transform:scaleX(1.300)">i</i>
<i class="s16" style="left:1274.22px;transform-origin:7.50px 0;transform:scaleX(0.950)">a</i>
<i class="s16" style="left:1289.73px;transform-origin:3.00px 0;transform:scaleX(1.300)">l</i>
<i class="s16" style="left:1296.03px;transform-origin:6.50px 0;transform:scaleX(1.000)">s</i>
<i class="s16" style="left:1318.09px;transform-origin:6.00px 0;transform:scaleX(1.083)">y</i>
<i class="s16" style="left:1331.59px;transform-origin:7.00px 0;transform:scaleX(1.083)">o</i>
<i class="s16" style="left:1346.58px;transform-origin:7.00px 0;transform:scaleX(1.100)">u</i>
<i class="s16" style="left:1370.89px;transform-origin:10.50px 0;transform:scaleX(1.176)">m</i>
<i class="s16" style="left:1393.76px;transform-origin:7.00px 0;transform:scaleX(1.100)">u</i>
<i class="s16" style="left:1408.78px;transform-origin:6.50px 0;transform:scaleX(1.000)">s</i>
<i class="s16" style="left:1423.04px;transform-origin:3.50px 0;transform:scaleX(1.143)">t</i>
<i class="s16" style="left:1439.45px;transform-origin:7.50px 0;transform:scaleX(1.091)">p</i>
<i class="s16" style="left:1454.50px;transform-origin:7.50px 0;transform:scaleX(0.950)">a</i>
<i class="s16" style="left:1471.01px;transform-origin:6.00px 0;transform:scaleX(1.083)">y</i>
<i class="s18" style="left:49.75px;transform-origin:12.00px 0;transform:scaleX(1.042)">W</i>
<i class="s18" style="left:75.77px;transform-origin:7.50px 0;transform:scaleX(1.077)">a</i>
<i class="s18" style="left:92.80px;transform-origin:8.00px 0;transform:scaleX(1.167)">n</i>
<i class="s18" style="left:110.73px;transform-origin:4.00px 0;transform:scaleX(1.300)">t</i>
<i class="s18" style="left:120.95px;transform-origin:7.00px 0;transform:scaleX(1.000)">s</i>
<i class="s19" style="left:820.70px;transform-origin:7.00px 0;transform:scaleX(1.000)">3</i>
<i class="s19" style="left:836.28px;transform-origin:7.00px 0;transform:scaleX(1.000)">0</i>
<i class="s19" style="left:850.87px;transform-origin:11.50px 0;transform:scaleX(1.000)">%</i>
<i class="s20" style="left:1089.50px;transform-origin:7.00px 0;transform:scaleX(0.950)">$</i>
<i class="s20" style="left:1106.55px;transform-origin:7.50px 0;transform:scaleX(1.091)">1</i>
<i class="s20" style="left:1122.59px;transform-origin:3.50px 0;transform:scaleX(1.300)">,</i>
<i class="s20" style="left:1133.39px;transform-origin:7.00px 0;transform:scaleX(1.167)">6</i>
<i class="s20" style="left:1149.94px;transform-origin:7.00px 0;transform:scaleX(1.083)">5</i>
<i class="s20" style="left:1166.98px;transform-origin:7.00px 0;transform:scaleX(1.250)">0</i>
<i class="s19" style="left:1186.70px;transform-origin:7.50px 0;transform:scaleX(1.091)">L</i>
<i class="s19" style="left:1200.34px;transform-origin:3.00px 0;transform:scaleX(1.300)">i</i>
<i class="s19" style="left:1208.15px;transform-origin:3.50px 0;transform:scaleX(1.143)">f</i>
<i class="s19" style="left:1215.78px;transform-origin:7.00px 0;transform:scaleX(1.083)">e</i>
<i class="s19" style="left:1230.34px;transform-origin:6.50px 0;transform:scaleX(1.000)">s</i>
<i class="s19" style="left:1244.61px;transform-origin:3.50px 0;transform:scaleX(1.143)">t</i>
<i class="s19" style="left:1254.22px;transform-origin:6.00px 0;transform:scaleX(1.083)">y</i>
<i class="s19" style="left:1267.72px;transform-origin:3.00px 0;transform:scaleX(1.300)">l</i>
<i class="s19" style="left:1274.53px;transform-origin:7.00px 0;transform:scaleX(1.083)">e</i>
<i class="s19" style="left:1296.89px;transform-origin:6.50px 0;transform:scaleX(1.000)">s</i>
<i class="s19" style="left:1310.15px;transform-origin:7.50px 0;transform:scaleX(1.091)">p</i>
<i class="s19" style="left:1325.70px;transform-origin:7.00px 0;transform:scaleX(1.083)">e</i>
<i class="s19" style="left:1341.28px;transform-origin:7.00px 0;transform:scaleX(1.200)">n</i>
<i class="s19" style="left:1356.31px;transform-origin:6.50px 0;transform:scaleX(1.091)">d</i>
<i class="s19" style="left:1371.86px;transform-origin:3.00px 0;transform:scaleX(1.300)">i</i>
<i class="s19" style="left:1379.15px;transform-origin:7.00px 0;transform:scaleX(1.200)">n</i>
<i class="s19" style="left:1394.18px;transform-origin:6.50px 0;transform:scaleX(1.091)">g</i>
<i class="s21" style="left:47.75px;transform-origin:8.50px 0;transform:scaleX(0.950)">S</i>
<i class="s21" style="left:65.39px;transform-origin:7.50px 0;transform:scaleX(1.077)">a</i>
<i class="s21" style="left:82.92px;transform-origin:7.00px 0;transform:scaleX(1.071)">v</i>
<i class="s21" style="left:97.89px;transform-origin:3.50px 0;transform:scaleX(1.300)">i</i>
<i class="s21" style="left:106.78px;transform-origin:8.00px 0;transform:scaleX(1.167)">n</i>
<i class="s21" style="left:124.23px;transform-origin:7.50px 0;transform:scaleX(1.154)">g</i>
<i class="s21" style="left:140.77px;transform-origin:7.00px 0;transform:scaleX(1.000)">s</i>
<i class="s22" style="left:820.20px;transform-origin:7.00px 0;transform:scaleX(0.950)">2</i>
<i class="s22" style="left:836.28px;transform-origin:7.00px 0;transform:scaleX(1.000)">0</i>
<i class="s22" style="left:850.87px;transform-origin:11.50px 0;transform:scaleX(1.000)">%</i>
<i class="s23" style="left:1089.50px;transform-origin:7.00px 0;transform:scaleX(0.950)">$</i>
<i class="s23" style="left:1106.55px;transform-origin:7.50px 0;transform:scaleX(1.091)">1</i>
<i class="s23" style="left:1122.59px;transform-origin:3.50px 0;transform:scaleX(1.300)">,</i>
<i class="s23" style="left:1132.89px;transform-origin:7.50px 0;transform:scaleX(1.091)">1</i>
<i class="s23" style="left:1149.94px;transform-origin:7.00px 0;transform:scaleX(1.250)">0</i>
<i class="s23" style="left:1166.98px;transform-origin:7.00px 0;transform:scaleX(1.250)">0</i>
<i class="s22" style="left:1185.70px;transform-origin:8.00px 0;transform:scaleX(0.950)">F</i>
<i class="s22" style="left:1200.78px;transform-origin:7.00px 0;transform:scaleX(1.100)">u</i>
<i class="s22" style="left:1217.31px;transform-origin:3.50px 0;transform:scaleX(1.143)">t</i>
<i class="s22" style="left:1225.92px;transform-origin:7.00px 0;transform:scaleX(1.100)">u</i>
<i class="s22" style="left:1241.95px;transform-origin:5.00px 0;transform:scaleX(1.300)">r</i>
<i class="s22" style="left:1251.51px;transform-origin:7.00px 0;transform:scaleX(1.083)">e</i>
<i class="s22" style="left:1275.39px;transform-origin:8.50px 0;transform:scaleX(1.067)">&amp;</i>
<i class="s22" style="left:1301.28px;transform-origin:6.50px 0;transform:scaleX(1.091)">d</i>
<i class="s22" style="left:1316.83px;transform-origin:7.00px 0;transform:scaleX(1.083)">e</i>
<i class="s22" style="left:1331.90px;transform-origin:7.50px 0;transform:scaleX(1.091)">b</i>
<i class="s22" style="left:1348.45px;transform-origin:3.50px 0;transform:scaleX(1.143)">t</i>
<i class="s22" style="left:1364.84px;transform-origin:7.50px 0;transform:scaleX(1.091)">p</i>
<i class="s22" style="left:1379.90px;transform-origin:7.50px 0;transform:scaleX(0.950)">a</i>
<i class="s22" style="left:1396.40px;transform-origin:6.00px 0;transform:scaleX(1.083)">y</i>
<i class="s22" style="left:1409.90px;transform-origin:7.00px 0;transform:scaleX(1.083)">o</i>
<i class="s22" style="left:1425.90px;transform-origin:3.50px 0;transform:scaleX(1.143)">f</i>
<i class="s22" style="left:1434.34px;transform-origin:3.50px 0;transform:scaleX(1.143)">f</i>
<i class="s24" style="left:49.20px;transform-origin:7.50px 0;transform:scaleX(1.133)">T</i>
<i class="s24" style="left:65.90px;transform-origin:7.50px 0;transform:scaleX(1.154)">o</i>
<i class="s24" style="left:83.23px;transform-origin:4.00px 0;transform:scaleX(1.300)">t</i>
<i class="s24" style="left:93.95px;transform-origin:7.50px 0;transform:scaleX(1.077)">a</i>
<i class="s24" style="left:110.48px;transform-origin:3.50px 0;transform:scaleX(1.300)">l</i>
<i class="s24" style="left:799.00px;transform-origin:7.50px 0;transform:scaleX(1.091)">1</i>
<i class="s24" style="left:816.05px;transform-origin:7.00px 0;transform:scaleX(1.250)">0</i>
<i class="s24" style="left:833.09px;transform-origin:7.00px 0;transform:scaleX(1.250)">0</i>
<i class="s24" style="left:849.64px;transform-origin:11.50px 0;transform:scaleX(1.095)">%</i>
<i class="s24" style="left:1089.00px;transform-origin:7.00px 0;transform:scaleX(0.950)">$</i>
<i class="s24" style="left:1106.05px;transform-origin:7.00px 0;transform:scaleX(1.083)">5</i>
<i class="s24" style="left:1122.09px;transform-origin:3.50px 0;transform:scaleX(1.300)">,</i>
<i class="s24" style="left:1132.39px;transform-origin:7.00px 0;transform:scaleX(1.083)">5</i>
<i class="s24" style="left:1149.44px;transform-origin:7.00px 0;transform:scaleX(1.250)">0</i>
<i class="s24" style="left:1166.48px;transform-origin:7.00px 0;transform:scaleX(1.250)">0</i>
<i class="s25" style="left:46.85px;transform-origin:10.00px 0;transform:scaleX(0.950)">C</i>
<i class="s25" style="left:68.16px;transform-origin:10.50px 0;transform:scaleX(1.000)">U</i>
<i class="s25" style="left:90.08px;transform-origin:10.50px 0;transform:scaleX(1.000)">R</i>
<i class="s25" style="left:110.87px;transform-origin:10.50px 0;transform:scaleX(1.000)">R</i>
<i class="s25" style="left:130.66px;transform-origin:10.00px 0;transform:scaleX(0.950)">E</i>
<i class="s25" style="left:150.60px;transform-origin:10.00px 0;transform:scaleX(1.062)">N</i>
<i class="s25" style="left:172.21px;transform-origin:8.50px 0;transform:scaleX(1.059)">T</i>
<i class="s25" style="left:201.02px;transform-origin:12.00px 0;transform:scaleX(1.050)">M</i>
<i class="s25" style="left:226.88px;transform-origin:11.00px 0;transform:scaleX(1.050)">O</i>
<i class="s25" style="left:250.83px;transform-origin:10.00px 0;transform:scaleX(1.062)">N</i>
<i class="s25" style="left:272.44px;transform-origin:8.50px 0;transform:scaleX(1.059)">T</i>
<i class="s25" style="left:291.85px;transform-origin:10.00px 0;transform:scaleX(1.062)">H</i>
<i class="s25" style="left:322.85px;transform-origin:9.50px 0;transform:scaleX(0.950)">S</i>
<i class="s25" style="left:342.30px;transform-origin:8.50px 0;transform:scaleX(1.059)">T</i>
<i class="s25" style="left:360.71px;transform-origin:10.00px 0;transform:scaleX(1.167)">A</i>
<i class="s25" style="left:381.62px;transform-origin:8.50px 0;transform:scaleX(1.059)">T</i>
<i class="s25" style="left:400.52px;transform-origin:10.50px 0;transform:scaleX(1.000)">U</i>
<i class="s25" style="left:421.96px;transform-origin:9.50px 0;transform:scaleX(0.950)">S</i>
<i class="s26" style="left:47.20px;transform-origin:9.50px 0;transform:scaleX(1.000)">B</i>
<i class="s26" style="left:66.37px;transform-origin:8.00px 0;transform:scaleX(1.083)">u</i>
<i class="s26" style="left:83.31px;transform-origin:7.00px 0;transform:scaleX(1.000)">c</i>
<i class="s26" style="left:98.82px;transform-origin:8.00px 0;transform:scaleX(1.167)">k</i>
<i class="s26" style="left:115.62px;transform-origin:7.00px 0;transform:scaleX(1.250)">e</i>
<i class="s26" style="left:132.25px;transform-origin:4.00px 0;transform:scaleX(1.300)">t</i>
<i class="s26" style="left:677.75px;transform-origin:7.50px 0;transform:scaleX(1.133)">T</i>
<i class="s26" style="left:693.95px;transform-origin:7.50px 0;transform:scaleX(1.077)">a</i>
<i class="s26" style="left:710.98px;transform-origin:6.00px 0;transform:scaleX(1.250)">r</i>
<i class="s26" style="left:723.06px;transform-origin:7.50px 0;transform:scaleX(1.154)">g</i>
<i class="s26" style="left:741.11px;transform-origin:7.00px 0;transform:scaleX(1.250)">e</i>
<i class="s26" style="left:757.72px;transform-origin:4.00px 0;transform:scaleX(1.300)">t</i>
<i class="s26" style="left:987.45px;transform-origin:9.00px 0;transform:scaleX(1.188)">A</i>
<i class="s26" style="left:1005.90px;transform-origin:7.00px 0;transform:scaleX(1.000)">c</i>
<i class="s26" style="left:1021.92px;transform-origin:4.00px 0;transform:scaleX(1.300)">t</i>
<i class="s26" style="left:1032.64px;transform-origin:8.00px 0;transform:scaleX(1.083)">u</i>
<i class="s26" style="left:1050.08px;transform-origin:7.50px 0;transform:scaleX(1.077)">a</i>
<i class="s26" style="left:1066.61px;transform-origin:3.50px 0;transform:scaleX(1.300)">l</i>
<i class="s26" style="left:1234.35px;transform-origin:10.00px 0;transform:scaleX(1.056)">O</i>
<i class="s26" style="left:1256.16px;transform-origin:7.00px 0;transform:scaleX(1.071)">v</i>
<i class="s26" style="left:1272.15px;transform-origin:7.00px 0;transform:scaleX(1.250)">e</i>
<i class="s26" style="left:1288.26px;transform-origin:6.00px 0;transform:scaleX(1.250)">r</i>
<i class="s26" style="left:1308.87px;transform-origin:3.50px 0;transform:scaleX(1.286)">/</i>
<i class="s26" style="left:1325.85px;transform-origin:9.50px 0;transform:scaleX(1.067)">U</i>
<i class="s26" style="left:1346.24px;transform-origin:8.00px 0;transform:scaleX(1.167)">n</i>
<i class="s26" style="left:1363.68px;transform-origin:7.50px 0;transform:scaleX(1.154)">d</i>
<i class="s26" style="left:1381.72px;transform-origin:7.00px 0;transform:scaleX(1.250)">e</i>
<i class="s26" style="left:1397.83px;transform-origin:6.00px 0;transform:scaleX(1.250)">r</i>
<i class="s26" style="left:1494.75px;transform-origin:11.50px 0;transform:scaleX(1.095)">%</i>
<i class="s26" style="left:1527.81px;transform-origin:7.50px 0;transform:scaleX(1.154)">o</i>
<i class="s26" style="left:1544.66px;transform-origin:4.50px 0;transform:scaleX(1.222)">f</i>
<i class="s26" style="left:1563.84px;transform-origin:3.50px 0;transform:scaleX(1.300)">I</i>
<i class="s26" style="left:1572.95px;transform-origin:8.00px 0;transform:scaleX(1.167)">n</i>
<i class="s26" style="left:1589.39px;transform-origin:7.00px 0;transform:scaleX(1.000)">c</i>
<i class="s26" style="left:1604.92px;transform-origin:7.50px 0;transform:scaleX(1.154)">o</i>
<i class="s26" style="left:1622.25px;transform-origin:11.50px 0;transform:scaleX(1.158)">m</i>
<i class="s26" style="left:1647.78px;transform-origin:7.00px 0;transform:scaleX(1.250)">e</i>
<i class="s27" style="left:47.75px;transform-origin:9.50px 0;transform:scaleX(1.067)">N</i>
<i class="s27" style="left:69.25px;transform-origin:7.00px 0;transform:scaleX(1.250)">e</i>
<i class="s27" style="left:85.86px;transform-origin:7.00px 0;transform:scaleX(1.250)">e</i>
<i class="s27" style="left:101.98px;transform-origin:7.50px 0;transform:scaleX(1.154)">d</i>
<i class="s27" style="left:118.52px;transform-origin:7.00px 0;transform:scaleX(1.000)">s</i>
<i class="s28" style="left:781.50px;transform-origin:7.00px 0;transform:scaleX(0.950)">$</i>
<i class="s28" style="left:798.55px;transform-origin:7.00px 0;transform:scaleX(1.083)">2</i>
<i class="s28" style="left:814.59px;transform-origin:3.50px 0;transform:scaleX(1.300)">,</i>
<i class="s28" style="left:824.89px;transform-origin:7.00px 0;transform:scaleX(1.083)">7</i>
<i class="s28" style="left:841.94px;transform-origin:7.00px 0;transform:scaleX(1.083)">5</i>
<i class="s28" style="left:858.98px;transform-origin:7.00px 0;transform:scaleX(1.250)">0</i>
<i class="s28" style="left:1089.50px;transform-origin:7.00px 0;transform:scaleX(0.950)">$</i>
<i class="s28" style="left:1106.55px;transform-origin:7.00px 0;transform:scaleX(1.083)">2</i>
<i class="s28" style="left:1122.59px;transform-origin:3.50px 0;transform:scaleX(1.300)">,</i>
<i class="s28" style="left:1133.39px;transform-origin:7.00px 0;transform:scaleX(1.167)">8</i>
<i class="s28" style="left:1149.94px;transform-origin:7.00px 0;transform:scaleX(1.083)">5</i>
<i class="s28" style="left:1167.48px;transform-origin:7.00px 0;transform:scaleX(1.167)">8</i>
<i class="s29" style="left:1389.70px;transform-origin:7.00px 0;transform:scaleX(0.950)">$</i>
<i class="s29" style="left:1406.75px;transform-origin:7.50px 0;transform:scaleX(1.091)">1</i>
<i class="s29" style="left:1423.79px;transform-origin:7.00px 0;transform:scaleX(1.250)">0</i>
<i class="s29" style="left:1441.34px;transform-origin:7.00px 0;transform:scaleX(1.167)">8</i>
<i class="s28" style="left:1612.70px;transform-origin:7.00px 0;transform:scaleX(1.083)">5</i>
<i class="s28" style="left:1629.75px;transform-origin:7.00px 0;transform:scaleX(1.083)">2</i>
<i class="s28" style="left:1646.79px;transform-origin:3.50px 0;transform:scaleX(1.300)">.</i>
<i class="s28" style="left:1656.09px;transform-origin:7.00px 0;transform:scaleX(1.250)">0</i>
<i class="s28" style="left:1672.64px;transform-origin:11.50px 0;transform:scaleX(1.095)">%</i>
<i class="s30" style="left:49.75px;transform-origin:12.00px 0;transform:scaleX(1.042)">W</i>
<i class="s30" style="left:75.77px;transform-origin:7.50px 0;transform:scaleX(1.077)">a</i>
<i class="s30" style="left:92.80px;transform-origin:8.00px 0;transform:scaleX(1.167)">n</i>
<i class="s30" style="left:110.73px;transform-origin:4.00px 0;transform:scaleX(1.300)">t</i>
<i class="s30" style="left:120.95px;transform-origin:7.00px 0;transform:scaleX(1.000)">s</i>
<i class="s31" style="left:781.50px;transform-origin:7.00px 0;transform:scaleX(0.950)">$</i>
<i class="s31" style="left:798.55px;transform-origin:7.50px 0;transform:scaleX(1.091)">1</i>
<i class="s31" style="left:814.59px;transform-origin:3.50px 0;transform:scaleX(1.300)">,</i>
<i class="s31" style="left:825.39px;transform-origin:7.00px 0;transform:scaleX(1.167)">6</i>
<i class="s31" style="left:841.94px;transform-origin:7.00px 0;transform:scaleX(1.083)">5</i>
<i class="s31" style="left:858.98px;transform-origin:7.00px 0;transform:scaleX(1.250)">0</i>
<i class="s31" style="left:1089.50px;transform-origin:7.00px 0;transform:scaleX(0.950)">$</i>
<i class="s31" style="left:1106.55px;transform-origin:7.50px 0;transform:scaleX(1.091)">1</i>
<i class="s31" style="left:1122.59px;transform-origin:3.50px 0;transform:scaleX(1.300)">,</i>
<i class="s31" style="left:1132.89px;transform-origin:7.00px 0;transform:scaleX(1.083)">2</i>
<i class="s31" style="left:1149.94px;transform-origin:7.00px 0;transform:scaleX(1.071)">4</i>
<i class="s31" style="left:1166.98px;transform-origin:7.00px 0;transform:scaleX(1.083)">3</i>
<i class="s32" style="left:1380.20px;transform-origin:4.00px 0;transform:scaleX(1.300)">-</i>
<i class="s32" style="left:1390.86px;transform-origin:7.00px 0;transform:scaleX(0.950)">$</i>
<i class="s32" style="left:1407.90px;transform-origin:7.00px 0;transform:scaleX(1.071)">4</i>
<i class="s32" style="left:1424.95px;transform-origin:7.00px 0;transform:scaleX(1.250)">0</i>
<i class="s32" style="left:1442.00px;transform-origin:7.00px 0;transform:scaleX(1.083)">7</i>
<i class="s31" style="left:1612.70px;transform-origin:7.00px 0;transform:scaleX(1.083)">2</i>
<i class="s31" style="left:1629.75px;transform-origin:7.00px 0;transform:scaleX(1.083)">2</i>
<i class="s31" style="left:1646.79px;transform-origin:3.50px 0;transform:scaleX(1.300)">.</i>
<i class="s31" style="left:1656.59px;transform-origin:7.00px 0;transform:scaleX(1.167)">6</i>
<i class="s31" style="left:1672.64px;transform-origin:11.50px 0;transform:scaleX(1.095)">%</i>
<i class="s33" style="left:47.75px;transform-origin:8.50px 0;transform:scaleX(0.950)">S</i>
<i class="s33" style="left:65.39px;transform-origin:7.50px 0;transform:scaleX(1.077)">a</i>
<i class="s33" style="left:82.92px;transform-origin:7.00px 0;transform:scaleX(1.071)">v</i>
<i class="s33" style="left:97.89px;transform-origin:3.50px 0;transform:scaleX(1.300)">i</i>
<i class="s33" style="left:106.78px;transform-origin:8.00px 0;transform:scaleX(1.167)">n</i>
<i class="s33" style="left:124.23px;transform-origin:7.50px 0;transform:scaleX(1.154)">g</i>
<i class="s33" style="left:140.77px;transform-origin:7.00px 0;transform:scaleX(1.000)">s</i>
<i class="s34" style="left:781.50px;transform-origin:7.00px 0;transform:scaleX(0.950)">$</i>
<i class="s34" style="left:798.55px;transform-origin:7.50px 0;transform:scaleX(1.091)">1</i>
<i class="s34" style="left:814.59px;transform-origin:3.50px 0;transform:scaleX(1.300)">,</i>
<i class="s34" style="left:824.89px;transform-origin:7.50px 0;transform:scaleX(1.091)">1</i>
<i class="s34" style="left:841.94px;transform-origin:7.00px 0;transform:scaleX(1.250)">0</i>
<i class="s34" style="left:858.98px;transform-origin:7.00px 0;transform:scaleX(1.250)">0</i>
<i class="s34" style="left:1089.50px;transform-origin:7.00px 0;transform:scaleX(0.950)">$</i>
<i class="s34" style="left:1106.55px;transform-origin:7.50px 0;transform:scaleX(1.091)">1</i>
<i class="s34" style="left:1122.59px;transform-origin:3.50px 0;transform:scaleX(1.300)">,</i>
<i class="s34" style="left:1132.89px;transform-origin:7.50px 0;transform:scaleX(1.091)">1</i>
<i class="s34" style="left:1149.94px;transform-origin:7.00px 0;transform:scaleX(1.250)">0</i>
<i class="s34" style="left:1166.98px;transform-origin:7.00px 0;transform:scaleX(1.250)">0</i>
<i class="s35" style="left:1423.70px;transform-origin:7.00px 0;transform:scaleX(0.950)">$</i>
<i class="s35" style="left:1440.75px;transform-origin:7.00px 0;transform:scaleX(1.250)">0</i>
<i class="s34" style="left:1612.70px;transform-origin:7.00px 0;transform:scaleX(1.083)">2</i>
<i class="s34" style="left:1629.75px;transform-origin:7.00px 0;transform:scaleX(1.250)">0</i>
<i class="s34" style="left:1646.79px;transform-origin:3.50px 0;transform:scaleX(1.300)">.</i>
<i class="s34" style="left:1656.09px;transform-origin:7.00px 0;transform:scaleX(1.250)">0</i>
<i class="s34" style="left:1672.64px;transform-origin:11.50px 0;transform:scaleX(1.095)">%</i>
<i class="s36" style="left:46.35px;transform-origin:7.00px 0;transform:scaleX(1.000)">P</i>
<i class="s36" style="left:61.13px;transform-origin:4.50px 0;transform:scaleX(1.143)">r</i>
<i class="s36" style="left:70.26px;transform-origin:6.00px 0;transform:scaleX(1.200)">o</i>
<i class="s36" style="left:89.94px;transform-origin:6.00px 0;transform:scaleX(1.083)">T</i>
<i class="s36" style="left:103.74px;transform-origin:5.50px 0;transform:scaleX(1.222)">e</i>
<i class="s36" style="left:117.46px;transform-origin:9.00px 0;transform:scaleX(1.062)">m</i>
<i class="s36" style="left:137.79px;transform-origin:6.00px 0;transform:scaleX(1.100)">p</i>
<i class="s36" style="left:151.24px;transform-origin:2.50px 0;transform:scaleX(1.000)">l</i>
<i class="s36" style="left:157.43px;transform-origin:6.00px 0;transform:scaleX(1.100)">a</i>
<i class="s36" style="left:171.58px;transform-origin:3.00px 0;transform:scaleX(1.300)">t</i>
<i class="s36" style="left:180.41px;transform-origin:5.50px 0;transform:scaleX(1.222)">e</i>
<i class="s36" style="left:200.91px;transform-origin:6.00px 0;transform:scaleX(1.100)">b</i>
<i class="s36" style="left:213.88px;transform-origin:5.50px 0;transform:scaleX(1.091)">y</i>
<i class="s36" style="left:233.88px;transform-origin:6.00px 0;transform:scaleX(1.000)">F</i>
<i class="s36" style="left:247.19px;transform-origin:2.50px 0;transform:scaleX(1.000)">i</i>
<i class="s36" style="left:253.88px;transform-origin:6.00px 0;transform:scaleX(1.000)">n</i>
<i class="s36" style="left:267.27px;transform-origin:6.00px 0;transform:scaleX(1.100)">a</i>
<i class="s36" style="left:280.93px;transform-origin:6.00px 0;transform:scaleX(1.000)">n</i>
<i class="s36" style="left:293.80px;transform-origin:5.50px 0;transform:scaleX(1.000)">c</i>
<i class="s36" style="left:306.37px;transform-origin:2.50px 0;transform:scaleX(1.000)">i</i>
<i class="s36" style="left:312.55px;transform-origin:6.00px 0;transform:scaleX(1.100)">a</i>
<i class="s36" style="left:326.21px;transform-origin:2.50px 0;transform:scaleX(1.000)">l</i>
<i class="s36" style="left:331.90px;transform-origin:7.50px 0;transform:scaleX(1.154)">A</i>
<i class="s36" style="left:347.99px;transform-origin:6.00px 0;transform:scaleX(1.000)">h</i>
<i class="s36" style="left:361.37px;transform-origin:6.00px 0;transform:scaleX(1.100)">a</i>
<i class="s36" style="left:375.52px;transform-origin:2.50px 0;transform:scaleX(1.300)">.</i>
<i class="s36" style="left:381.43px;transform-origin:5.50px 0;transform:scaleX(1.000)">c</i>
<i class="s36" style="left:393.99px;transform-origin:6.00px 0;transform:scaleX(1.200)">o</i>
<i class="s36" style="left:407.88px;transform-origin:9.00px 0;transform:scaleX(1.062)">m</i>
<i class="s36" style="left:433.99px;transform-origin:3.50px 0;transform:scaleX(1.200)">-</i>
<i class="s36" style="left:449.38px;transform-origin:7.00px 0;transform:scaleX(1.000)">P</i>
<i class="s36" style="left:464.16px;transform-origin:4.50px 0;transform:scaleX(1.143)">r</i>
<i class="s36" style="left:473.29px;transform-origin:5.50px 0;transform:scaleX(1.222)">e</i>
<i class="s36" style="left:487.01px;transform-origin:9.00px 0;transform:scaleX(1.062)">m</i>
<i class="s36" style="left:506.83px;transform-origin:2.50px 0;transform:scaleX(1.000)">i</i>
<i class="s36" style="left:513.51px;transform-origin:6.00px 0;transform:scaleX(1.000)">u</i>
<i class="s36" style="left:527.90px;transform-origin:9.00px 0;transform:scaleX(1.062)">m</i>
<i class="s36" style="left:554.51px;transform-origin:3.50px 0;transform:scaleX(1.286)">f</i>
<i class="s36" style="left:561.72px;transform-origin:2.50px 0;transform:scaleX(1.000)">i</i>
<i class="s36" style="left:568.96px;transform-origin:6.00px 0;transform:scaleX(1.000)">n</i>
<i class="s36" style="left:582.33px;transform-origin:6.00px 0;transform:scaleX(1.100)">a</i>
<i class="s36" style="left:596.01px;transform-origin:6.00px 0;transform:scaleX(1.000)">n</i>
<i class="s36" style="left:608.88px;transform-origin:5.50px 0;transform:scaleX(1.000)">c</i>
<i class="s36" style="left:621.44px;transform-origin:2.50px 0;transform:scaleX(1.000)">i</i>
<i class="s36" style="left:627.63px;transform-origin:6.00px 0;transform:scaleX(1.100)">a</i>
<i class="s36" style="left:641.29px;transform-origin:2.50px 0;transform:scaleX(1.000)">l</i>
<i class="s36" style="left:655.26px;transform-origin:3.00px 0;transform:scaleX(1.300)">t</i>
<i class="s36" style="left:664.08px;transform-origin:6.00px 0;transform:scaleX(1.200)">o</i>
<i class="s36" style="left:677.47px;transform-origin:6.00px 0;transform:scaleX(1.200)">o</i>
<i class="s36" style="left:690.87px;transform-origin:2.50px 0;transform:scaleX(1.000)">l</i>
<i class="s36" style="left:697.05px;transform-origin:5.50px 0;transform:scaleX(1.111)">s</i>
<i class="s36" style="left:715.44px;transform-origin:6.00px 0;transform:scaleX(1.100)">a</i>
<i class="s36" style="left:729.12px;transform-origin:6.00px 0;transform:scaleX(1.000)">n</i>
<i class="s36" style="left:742.49px;transform-origin:6.00px 0;transform:scaleX(1.100)">d</i>
<i class="s36" style="left:764.24px;transform-origin:3.00px 0;transform:scaleX(1.300)">t</i>
<i class="s36" style="left:773.05px;transform-origin:5.50px 0;transform:scaleX(1.222)">e</i>
<i class="s36" style="left:786.79px;transform-origin:9.00px 0;transform:scaleX(1.062)">m</i>
<i class="s36" style="left:807.10px;transform-origin:6.00px 0;transform:scaleX(1.100)">p</i>
<i class="s36" style="left:820.57px;transform-origin:2.50px 0;transform:scaleX(1.000)">l</i>
<i class="s36" style="left:826.74px;transform-origin:6.00px 0;transform:scaleX(1.100)">a</i>
<i class="s36" style="left:840.91px;transform-origin:3.00px 0;transform:scaleX(1.300)">t</i>
<i class="s36" style="left:849.72px;transform-origin:5.50px 0;transform:scaleX(1.222)">e</i>
<i class="s36" style="left:862.46px;transform-origin:5.50px 0;transform:scaleX(1.111)">s</i>
<i class="s37" style="left:45.50px;transform-origin:7.50px 0;transform:scaleX(0.950)">E</i>
<i class="s37" style="left:59.31px;transform-origin:5.50px 0;transform:scaleX(1.111)">x</i>
<i class="s37" style="left:70.86px;transform-origin:6.00px 0;transform:scaleX(0.950)">p</i>
<i class="s37" style="left:83.73px;transform-origin:2.00px 0;transform:scaleX(1.000)">l</i>
<i class="s37" style="left:88.16px;transform-origin:6.00px 0;transform:scaleX(1.000)">o</i>
<i class="s37" style="left:101.08px;transform-origin:4.00px 0;transform:scaleX(1.000)">r</i>
<i class="s37" style="left:108.09px;transform-origin:6.00px 0;transform:scaleX(1.000)">e</i>
<i class="s37" style="left:127.30px;transform-origin:8.50px 0;transform:scaleX(1.000)">m</i>
<i class="s37" style="left:145.28px;transform-origin:6.00px 0;transform:scaleX(1.000)">o</i>
<i class="s37" style="left:158.22px;transform-origin:4.00px 0;transform:scaleX(1.000)">r</i>
<i class="s37" style="left:165.23px;transform-origin:6.00px 0;transform:scaleX(1.000)">e</i>
<i class="s37" style="left:182.44px;transform-origin:7.50px 0;transform:scaleX(0.950)">P</i>
<i class="s37" style="left:196.19px;transform-origin:4.00px 0;transform:scaleX(1.000)">r</i>
<i class="s37" style="left:203.20px;transform-origin:6.00px 0;transform:scaleX(1.000)">o</i>
<i class="s37" style="left:222.33px;transform-origin:3.00px 0;transform:scaleX(1.000)">t</i>
<i class="s37" style="left:228.98px;transform-origin:6.00px 0;transform:scaleX(1.000)">e</i>
<i class="s37" style="left:241.98px;transform-origin:8.50px 0;transform:scaleX(1.000)">m</i>
<i class="s37" style="left:260.47px;transform-origin:6.00px 0;transform:scaleX(0.950)">p</i>
<i class="s37" style="left:273.34px;transform-origin:2.00px 0;transform:scaleX(1.000)">l</i>
<i class="s37" style="left:277.27px;transform-origin:6.00px 0;transform:scaleX(0.950)">a</i>
<i class="s37" style="left:290.72px;transform-origin:3.00px 0;transform:scaleX(1.000)">t</i>
<i class="s37" style="left:297.36px;transform-origin:6.00px 0;transform:scaleX(1.000)">e</i>
<i class="s37" style="left:308.86px;transform-origin:5.50px 0;transform:scaleX(0.950)">s</i>
<i class="s37" style="left:325.22px;transform-origin:6.00px 0;transform:scaleX(0.950)">a</i>
<i class="s37" style="left:338.67px;transform-origin:3.00px 0;transform:scaleX(1.000)">t</i>
<i class="s37" style="left:350.52px;transform-origin:7.00px 0;transform:scaleX(0.950)">F</i>
<i class="s37" style="left:363.73px;transform-origin:2.00px 0;transform:scaleX(1.000)">i</i>
<i class="s37" style="left:369.14px;transform-origin:5.50px 0;transform:scaleX(1.000)">n</i>
<i class="s37" style="left:380.00px;transform-origin:6.00px 0;transform:scaleX(0.950)">a</i>
<i class="s37" style="left:393.45px;transform-origin:5.50px 0;transform:scaleX(1.000)">n</i>
<i class="s37" style="left:404.81px;transform-origin:5.50px 0;transform:scaleX(1.000)">c</i>
<i class="s37" style="left:416.53px;transform-origin:2.00px 0;transform:scaleX(1.000)">i</i>
<i class="s37" style="left:420.45px;transform-origin:6.00px 0;transform:scaleX(0.950)">a</i>
<i class="s37" style="left:433.91px;transform-origin:2.00px 0;transform:scaleX(1.000)">l</i>
<i class="s37" style="left:438.33px;transform-origin:6.50px 0;transform:scaleX(1.000)">A</i>
<i class="s37" style="left:452.66px;transform-origin:5.50px 0;transform:scaleX(1.000)">h</i>
<i class="s37" style="left:463.52px;transform-origin:6.00px 0;transform:scaleX(0.950)">a</i>
<i class="s37" style="left:475.97px;transform-origin:3.00px 0;transform:scaleX(1.000)">.</i>
<i class="s37" style="left:482.17px;transform-origin:5.50px 0;transform:scaleX(1.000)">c</i>
<i class="s37" style="left:492.89px;transform-origin:6.00px 0;transform:scaleX(1.000)">o</i>
<i class="s37" style="left:505.81px;transform-origin:8.50px 0;transform:scaleX(1.000)">m</i>
</div>
</body></html>
